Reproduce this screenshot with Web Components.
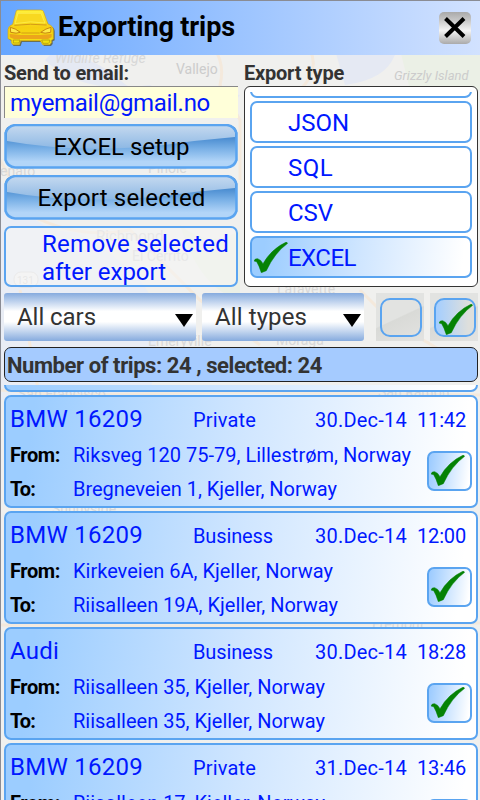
<!DOCTYPE html>
<html lang="en">
<head>
    <meta charset="UTF-8">
    <title>Exporting trips</title>
    <style>
        :root {
            --line: #5aa4f0;
            --link: #0018ff;
            --fade: linear-gradient(97deg, #9ccdff 6%, #d0e6ff 50%, #fff 96%);
        }
        * {
            box-sizing: border-box;
        }
        body {
            margin: 0;
            width: 480px;
            height: 800px;
            overflow: hidden;
            font-family: Roboto, sans-serif;
            font-size: 20px;
        }
    </style>
</head>
<body>
    <export-page></export-page>

    <script>
        function define(name, html, setup) {
            customElements.define(name, class extends HTMLElement {
                constructor() {
                    super();
                    const shadow = this.attachShadow({mode: 'open'});
                    shadow.innerHTML = '<style>*{box-sizing:border-box}:host{display:block;box-sizing:border-box}</style>' + html;
                }
                connectedCallback() {
                    if (setup) setup(this, this.shadowRoot);
                }
            });
        }

        // Pale road map behind the whole page
        define('map-backdrop', `
            <style>
                :host { overflow: hidden; background: #f0f0ee; }
                svg { display: block; }
                text { font-family: Roboto, sans-serif; font-size: 14px; fill: #d8d8d8; }
                .i { font-style: italic; }
            </style>
            <svg width="480" height="800" viewBox="0 0 480 800">
                <path d="M55 50Q100 60 120 80T190 90L240 95Q215 125 195 110L150 85Q80 95 45 60Z" fill="#e5e9f3"/>
                <path d="M335 50L395 55Q385 80 345 85Z" fill="#e5e9f3"/>
                <path d="M0 180Q35 235 75 232Q105 245 140 280L160 310L150 400H0Z" fill="#e9edf5"/>
                <path d="M400 50H480V90H410Z M180 225Q210 250 240 230V300Q200 290 180 225Z" fill="#ebf0e6"/>
                <g fill="none" stroke="#f4e9dc" stroke-width="3">
                    <path d="M215 50Q225 65 220 85L240 120V180M310 50Q320 70 300 90M0 160L30 215Q80 240 130 230L200 300L260 345"/>
                    <path d="M360 290L390 320L440 350M20 290L40 400M0 390L60 395L240 392L480 395M0 625L160 626L480 623"/>
                </g>
                <rect x="14" y="272" width="24" height="15" rx="7" fill="#f3f3f3" stroke="#ddd"/>
                <text x="17" y="284" style="font-size:10px">131</text>
                <text x="55" y="63" class="i">Wildlife Refuge</text>
                <text x="176" y="74" style="fill:#ccc">Vallejo</text>
                <text x="394" y="80" class="i" style="font-size:13px;fill:#ccc">Grizzly Island</text>
                <text x="148" y="173">Pinole</text>
                <text x="0" y="176">enato</text>
                <text x="96" y="241" style="font-size:15px">Richmond</text>
                <text x="132" y="261">El Cerrito</text>
                <text x="277" y="294">Lafayette</text>
                <text x="276" y="345">Moraga</text>
                <text x="148" y="346">Emeryville</text>
                <text x="18" y="399">San Francisco</text>
                <text x="378" y="397">San Ramon</text>
                <text x="52" y="514">Sunnyside</text>
                <text x="372" y="629">Fremont</text>
            </svg>`);

        define('check-mark', `
            <style>:host { width: 34px; height: 31px; flex: none; } svg { display: block; }</style>
            <svg width="34" height="31" viewBox="0 0 102 93">
                <path d="M0 57L4 51L11 50Q21 53 27 65Q52 21 97 0L101 4Q62 32 37 86L22 92Q15 70 8 59Z" fill="#058205" stroke="#058205" stroke-width="1.500"/>
            </svg>`);

        define('car-icon', `
            <style>:host { width: 54px; height: 44px; } svg { display: block; }</style>
            <svg width="54" height="44" viewBox="0 0 162 132">
                <defs><linearGradient id="g" x2="0" y2="1">
                    <stop offset="0" stop-color="#fff23a"/><stop offset=".5" stop-color="#f6cf12"/><stop offset="1" stop-color="#f1e514"/>
                </linearGradient></defs>
                <path d="M42 15Q44 13 48 13H106Q112 13 114 17L131 55Q150 61 150 74V101L144 104V112L139 118H118L111 106H52L48 118H27L22 111V103L14 99V71Q15 60 29 56Z" fill="#5f5d35" opacity=".8" transform="translate(2 2)"/>
                <path d="M37 14Q39 12 43 12H110Q116 12 118 16L132 54Q148 60 148 73V99L142 103V110L137 116H116L109 104H50L46 116H27L22 110V102L12 98V71Q13 60 26 55Z" fill="url(#g)" stroke="#d5a414" stroke-width="2"/>
                <path d="M42 22H111L123 51Q80 43 33 53Z" fill="#f8d820" stroke="#fff35a" stroke-width="2"/>
                <path d="M31 58Q80 52 128 57M52 81H107" fill="none" stroke="#d59b16" stroke-width="3"/>
                <path d="M19 64Q34 67 49 79Q38 84 20 79ZM141 64Q126 67 110 79Q122 84 140 79Z" fill="#ffe94a" stroke="#c88612" stroke-width="3"/>
                <path d="M17 84L50 87H110L143 84V94L132 99H30L17 94Z" fill="#eca51b"/>
                <path d="M28 102H48L45 111H28ZM113 102H137V108L133 112H117Z" fill="#eee20e" stroke="#a98a11" stroke-width="2"/>
            </svg>`);

        define('close-button', `
            <style>
                :host { width: 32px; height: 32px; border-radius: 5px; background: linear-gradient(#aaa, #c6c6c6 25%, #f4f4f4 58%, #aaa); }
                svg { display: block; }
            </style>
            <svg width="32" height="32" viewBox="0 0 32 32"><path d="M6.500 6.500L25 24.500M25 6.500L6.500 24.500" stroke="#000" stroke-width="4"/></svg>`);

        define('title-bar', `
            <style>
                :host { height: 54px; display: flex; align-items: center; padding: 0 9px 0 3px; background: linear-gradient(90deg, #66a6ff, #d2e2ff); }
                ::slotted(*) { font-size: 27px; font-weight: 700; line-height: 52px; height: 54px; }
                close-button { margin: 0 0 1px auto; }
            </style>
            <car-icon></car-icon><slot></slot><close-button></close-button>`);

        define('field-label', `
            <style>:host { height: 31px; padding-top: 5px; line-height: 26px; font-weight: 700; color: #333; }</style>
            <slot></slot>`);

        define('email-field', `
            <style>
                :host { height: 32px; padding-left: 5px; line-height: 33px; font-size: 24px; color: var(--link);
                    background: #ffffd9; border: solid #888; border-width: 1px 0 0 1px; }
            </style>
            <slot></slot>`);

        define('glossy-button', `
            <style>
                :host { display: grid; height: 45px; font-size: 24px; line-height: 47px; color: #000; }
                svg, div { grid-area: 1 / 1; }
                div { text-align: center; padding-left: 1px; }
            </style>
            <svg width="234" height="45" viewBox="0 0 234 45">
                <defs>
                    <linearGradient id="b" x2="0" y2="1"><stop offset=".3" stop-color="#4b8dd1"/><stop offset=".55" stop-color="#79b0e6"/><stop offset=".85" stop-color="#b2d5f8"/></linearGradient>
                    <linearGradient id="s" x2="0" y2="1"><stop offset="0" stop-color="#c3d8ef"/><stop offset="1" stop-color="#8db8e4"/></linearGradient>
                </defs>
                <path d="M9 1H225Q233 2 233 9V36Q233 43 225 44H9Q1 43 1 36V9Q1 2 9 1Z" fill="url(#b)"/>
                <path d="M9 2H225Q232 3 231 13Q195 16 160 21Q75 30 3 17V10Q3 3 9 2Z" fill="url(#s)"/>
                <path d="M11 1H223Q230 2 232.500 9V36Q230 43 223 43.500H11Q4 43 1.500 36V9Q4 2 11 1Z" fill="none" stroke="var(--line)" stroke-width="2.500"/>
            </svg>
            <div><slot></slot></div>`);

        define('toggle-box', `
            <style>
                :host { height: 61px; padding: 2px 0 0 36px; border: 2px solid var(--line); border-radius: 7px;
                    font-size: 24px; line-height: 28px; color: var(--link); background: #f6f6f688; }
            </style>
            <slot></slot>`);

        define('option-list', `
            <style>
                :host { height: 201px; padding: 5px; border: 1px solid #333; border-radius: 6px; background: #fff; }
                div { display: flex; flex-direction: column; gap: 3px; height: 187px; overflow: hidden; }
                ::slotted(:first-child) { margin-top: -36px; }
            </style>
            <div><slot></slot></div>`);

        define('option-item', `
            <style>
                :host { display: flex; flex: none; height: 42px; border: 2px solid var(--line); border-radius: 7px;
                    font-size: 24px; line-height: 40px; color: var(--link); background: #fff; }
                :host([selected]) { background: var(--fade); }
                .mark { width: 36px; padding: 4px 0 0 2px; }
                :host(:not([selected])) check-mark { display: none; }
            </style>
            <div class="mark"><check-mark></check-mark></div><slot></slot>`);

        define('drop-down', `
            <style>
                :host { display: flex; justify-content: space-between; align-items: center; height: 48px; padding: 0 3px 0 13px;
                    border-radius: 3px; font-size: 24px; line-height: 48px; color: #333;
                    background: linear-gradient(#86abde, #fff 38%, #fff 60%, #86abde); }
                svg { margin-top: 6px; }
            </style>
            <slot></slot><svg width="18" height="13" viewBox="0 0 18 13"><path d="M0 0H18L9 13Z"/></svg>`);

        define('select-tile', `
            <style>
                :host { display: grid; place-items: start; width: 48px; height: 48px; padding: 5px 2px 0 4px;
                    background: linear-gradient(155deg, #e2e3e1 49%, #d9dad7 51%, #e3e3e1); }
                div { width: 42px; height: 39px; padding: 4px 0 0 3px; border: 2px solid var(--line); border-radius: 10px; }
                :host([selected]) div { background: linear-gradient(90deg, #a4ceff, #dedfdc 85%); }
                :host(:not([selected])) check-mark { display: none; }
            </style>
            <div><check-mark></check-mark></div>`);

        define('trip-count', `
            <style>
                :host { height: 35px; padding-left: 2px; line-height: 35px; font-size: 22px; font-weight: 700; color: #333;
                    border: 1px solid #222; border-radius: 7px; background: #a5cbff; }
            </style>
            <slot></slot>`);

        define('trip-card', `
            <style>
                :host { flex: none; height: 113px; border: 2px solid var(--line); border-radius: 7px; padding: 2px 4px 0 4px;
                    background: var(--fade); color: var(--link); }
                .head { display: grid; grid-template-columns: 183px 122px 102px 1fr; height: 39px; line-height: 41px; align-items: baseline; }
                ::slotted([slot=name]) { font-size: 24px; }
                .body { display: flex; justify-content: space-between; }
                .row { display: grid; grid-template-columns: 63px 1fr; line-height: 34px; height: 34px; }
                b { color: #000; }
                .box { width: 45px; height: 40px; margin-top: 13px; padding: 2px 0 0 2px; flex: none;
                    border: 2px solid var(--line); border-radius: 7px; background: linear-gradient(97deg, #9acaff, #fff 95%); }
            </style>
            <div class="head"><slot name="name"></slot><slot name="type"></slot><slot name="date"></slot><slot name="time"></slot></div>
            <div class="body">
                <div>
                    <div class="row"><b><fit-text width="50">From:</fit-text></b><slot name="from"></slot></div>
                    <div class="row"><b><fit-text width="25">To:</fit-text></b><slot name="to"></slot></div>
                </div>
                <div class="box"><check-mark></check-mark></div>
            </div>`);

        define('export-page', `
            <style>
                :host { display: grid; width: 480px; height: 800px; overflow: hidden; }
                map-backdrop, main { grid-area: 1 / 1; }
                main { z-index: 1; display: flex; flex-direction: column; height: 800px; border: solid #8a8c94; border-width: 1px 0 0 1px; }
                .page { flex: 1; min-height: 0; display: flex; flex-direction: column; padding: 0 2px 0 3px; }
                .top { display: grid; grid-template-columns: 234px 234px; gap: 6px; }
                .stack { display: flex; flex-direction: column; gap: 6px; }
                .stack field-label { margin-bottom: -6px; }
                .filters { display: grid; grid-template-columns: 192px 162px 54px 48px; gap: 6px; margin: 6px 0; }
                .filters select-tile:nth-child(3) { margin-left: 6px; }
                .trips { flex: 1; min-height: 0; margin-top: 3px; display: flex; flex-direction: column; gap: 3px; overflow: hidden; }
                .trips > :first-child { margin-top: -106px; }
            </style>
            <map-backdrop></map-backdrop>
            <main>
                <title-bar><fit-text width="177">Exporting trips</fit-text></title-bar>
                <div class="page">
                    <div class="top">
                        <div class="stack">
                            <field-label><fit-text width="125">Send to email:</fit-text></field-label>
                            <email-field><fit-text width="200">myemail@gmail.no</fit-text></email-field>
                            <glossy-button><fit-text width="136">EXCEL setup</fit-text></glossy-button>
                            <glossy-button><fit-text width="168">Export selected</fit-text></glossy-button>
                            <toggle-box><fit-text width="187">Remove selected</fit-text><br><fit-text width="124">after export</fit-text></toggle-box>
                        </div>
                        <div>
                            <field-label><fit-text width="100">Export type</fit-text></field-label>
                            <option-list>
                                <option-item></option-item>
                                <option-item><fit-text width="61">JSON</fit-text></option-item>
                                <option-item><fit-text width="45">SQL</fit-text></option-item>
                                <option-item><fit-text width="45">CSV</fit-text></option-item>
                                <option-item selected><fit-text width="68">EXCEL</fit-text></option-item>
                            </option-list>
                        </div>
                    </div>
                    <div class="filters">
                        <drop-down><fit-text width="79">All cars</fit-text></drop-down>
                        <drop-down><fit-text width="92">All types</fit-text></drop-down>
                        <select-tile></select-tile>
                        <select-tile selected></select-tile>
                    </div>
                    <trip-count><fit-text width="315">Number of trips: 24 , selected: 24</fit-text></trip-count>
                    <div class="trips">
                        <trip-card></trip-card>
                        <trip-card>
                            <fit-text slot="name" width="133">BMW 16209</fit-text><fit-text slot="type" width="63">Private</fit-text>
                            <fit-text slot="date" width="92">30.Dec-14</fit-text><fit-text slot="time" width="49">11:42</fit-text>
                            <fit-text slot="from" width="338">Riksveg 120 75-79, Lillestrøm, Norway</fit-text>
                            <fit-text slot="to" width="264">Bregneveien 1, Kjeller, Norway</fit-text>
                        </trip-card>
                        <trip-card>
                            <fit-text slot="name" width="133">BMW 16209</fit-text><fit-text slot="type" width="80">Business</fit-text>
                            <fit-text slot="date" width="92">30.Dec-14</fit-text><fit-text slot="time" width="49">12:00</fit-text>
                            <fit-text slot="from" width="260">Kirkeveien 6A, Kjeller, Norway</fit-text>
                            <fit-text slot="to" width="265">Riisalleen 19A, Kjeller, Norway</fit-text>
                        </trip-card>
                        <trip-card>
                            <fit-text slot="name" width="49">Audi</fit-text><fit-text slot="type" width="80">Business</fit-text>
                            <fit-text slot="date" width="92">30.Dec-14</fit-text><fit-text slot="time" width="49">18:28</fit-text>
                            <fit-text slot="from" width="252">Riisalleen 35, Kjeller, Norway</fit-text>
                            <fit-text slot="to" width="252">Riisalleen 35, Kjeller, Norway</fit-text>
                        </trip-card>
                        <trip-card>
                            <fit-text slot="name" width="133">BMW 16209</fit-text><fit-text slot="type" width="63">Private</fit-text>
                            <fit-text slot="date" width="92">31.Dec-14</fit-text><fit-text slot="time" width="49">13:46</fit-text>
                            <fit-text slot="from" width="252">Riisalleen 17, Kjeller, Norway</fit-text>
                        </trip-card>
                    </div>
                </div>
            </main>`);

        // Tracks its text out or in until it is as wide as the width attribute
        define('fit-text', `
            <style>:host { display: inline-block; white-space: nowrap; justify-self: start; } span { display: inline-block; }</style>
            <span><slot></slot></span>`, (host, root) => {
            const span = root.querySelector('span');
            const count = host.textContent.length;
            const gap = (host.getAttribute('width') - span.getBoundingClientRect().width) / count;
            span.style.letterSpacing = gap.toFixed(3) + 'px';
        });
    </script>
</body>
</html>
